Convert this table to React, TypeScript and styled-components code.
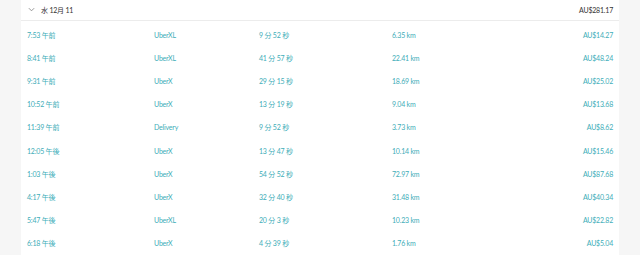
import React from "react";
import styled, { createGlobalStyle } from "styled-components";

type Trip = {
  time: string,
  product: string,
  duration: string,
  distance: string,
  fare: string,
}

const trips: Trip[] = [
  { time: "7:53 午前", product: "UberXL", duration: "9 分 52 秒", distance: "6.35 km", fare: "AU$14.27" },
  { time: "8:41 午前", product: "UberXL", duration: "41 分 57 秒", distance: "22.41 km", fare: "AU$48.24" },
  { time: "9:31 午前", product: "UberX", duration: "29 分 15 秒", distance: "18.69 km", fare: "AU$25.02" },
  { time: "10:52 午前", product: "UberX", duration: "13 分 19 秒", distance: "9.04 km", fare: "AU$13.68" },
  { time: "11:39 午前", product: "Delivery", duration: "9 分 52 秒", distance: "3.73 km", fare: "AU$8.62" },
  { time: "12:05 午後", product: "UberX", duration: "13 分 47 秒", distance: "10.14 km", fare: "AU$15.46" },
  { time: "1:03 午後", product: "UberX", duration: "54 分 52 秒", distance: "72.97 km", fare: "AU$87.68" },
  { time: "4:17 午後", product: "UberX", duration: "32 分 40 秒", distance: "31.48 km", fare: "AU$40.34" },
  { time: "5:47 午後", product: "UberXL", duration: "20 分 3 秒", distance: "10.23 km", fare: "AU$22.82" },
  { time: "6:18 午後", product: "UberX", duration: "4 分 39 秒", distance: "1.76 km", fare: "AU$5.04" },
];

const GlobalStyle = createGlobalStyle`
  html, body {
    margin: 0;
    padding: 0;
    background: #f6f6f6;
  }
  body {
    font-family: Lato, "Noto Sans CJK JP", sans-serif;
  }
`;

const Page = styled.div`
  padding: 0 21px;
`;

const Panel = styled.section`
  background: #fff;
  width: 598px;
`;

const DayHeader = styled.div`
  display: flex;
  align-items: center;
  height: 19px;
  padding: 0 6px 1px 7px;
  border-bottom: 1px solid #ececec;
  color: #333;
  font-size: 7px;
  letter-spacing: -0.2px;
`;

const Chevron = styled.svg`
  width: 7px;
  height: 7px;
  margin-right: 6px;
`;

const DayLabel = styled.span`
  flex: 1;
`;

const Rows = styled.div`
  padding-top: 2px;
`;

const Row = styled.div`
  display: grid;
  grid-template-columns: 127px 105px 133px 1fr auto;
  align-items: center;
  height: 23.2px;
  padding: 0 6px;
  color: #40adb8;
  font-size: 7px;
  letter-spacing: -0.2px;
`;

const Cell = styled.span<{ $right?: boolean }>`
  white-space: nowrap;
  text-align: ${(p) => (p.$right ? "right" : "left")};
`;

export default function App() {
  return (
    <>
      <GlobalStyle />
      <Page>
        <Panel>
          <DayHeader>
            <Chevron viewBox="0 0 8 8">
              <path d="M1 2.5 L4 5.5 L7 2.5" fill="none" stroke="#888" strokeWidth="1" />
            </Chevron>
            <DayLabel>水 12月 11</DayLabel>
            <span>AU$281.17</span>
          </DayHeader>
          <Rows>
            {trips.map((t) => (
              <Row key={t.time}>
                <Cell>{t.time}</Cell>
                <Cell>{t.product}</Cell>
                <Cell>{t.duration}</Cell>
                <Cell>{t.distance}</Cell>
                <Cell $right>{t.fare}</Cell>
              </Row>
            ))}
          </Rows>
        </Panel>
      </Page>
    </>
  );
}
